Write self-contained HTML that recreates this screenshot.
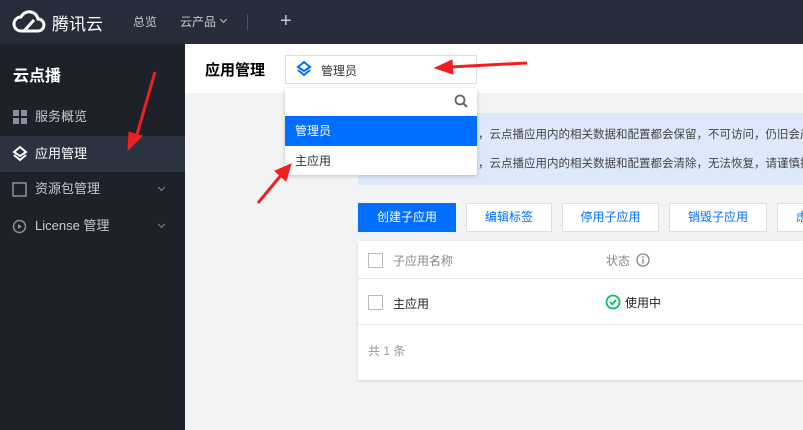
<!DOCTYPE html><html><head><meta charset="utf-8"><style>
*{margin:0;padding:0;box-sizing:border-box}
body{width:803px;height:430px;overflow:hidden;background:#f2f3f5;font-family:"Liberation Sans","Noto Sans CJK SC",sans-serif;font-size:12px;position:relative}
.a{position:absolute}
.top{left:0;top:0;width:803px;height:44px;background:#262c39}
.side{left:0;top:44px;width:185px;height:386px;background:#1d2129}
.ni{left:0;width:185px;height:36px;color:#c6c9cf;font-size:13px;line-height:36px;padding-left:35px}
.btn{top:203px;height:29px;background:#fff;border:1px solid #dcdee2;color:#006eff;text-align:center;line-height:27px;font-size:12px}
.chev{left:159px;width:5px;height:5px;border-right:1.3px solid #8a8f99;border-bottom:1.3px solid #8a8f99;transform:rotate(45deg)}
</style></head><body>
<div class="a top"></div>
<svg class="a" style="left:12px;top:8px" width="34" height="26" viewBox="0 0 34 26"><path d="M9 23 H26 A6 6 0 0 0 26 11 A9 9 0 0 0 9 9 A7 7 0 0 0 9 23 Z M12 23 L22 12" fill="none" stroke="#fff" stroke-width="3"/></svg>
<div class="a" style="left:52px;top:10px;color:#fff;font-size:17px">腾讯云</div>
<div class="a" style="left:133px;top:13px;color:#c6c9cf;font-size:12px">总览</div>
<div class="a" style="left:180px;top:13px;color:#c6c9cf;font-size:12px">云产品</div>
<div class="a" style="left:221px;top:17px;width:5px;height:5px;border-right:1.2px solid #c6c9cf;border-bottom:1.2px solid #c6c9cf;transform:rotate(45deg)"></div>
<div class="a" style="left:247px;top:14px;width:1px;height:16px;background:#4a505c"></div>
<div class="a" style="left:280px;top:10px;color:#c6c9cf;font-size:20px">+</div>
<div class="a side"></div>
<div class="a" style="left:13px;top:62px;color:#fff;font-size:16px;font-weight:bold">云点播</div>
<div class="a ni" style="top:99px">服务概览</div>
<svg class="a" style="left:13px;top:110px" width="14" height="14"><g fill="#8a8f99"><rect x="0" y="0" width="6" height="6"/><rect x="8" y="0" width="6" height="6"/><rect x="0" y="8" width="6" height="6"/><rect x="8" y="8" width="6" height="6"/></g></svg>
<div class="a ni" style="top:136px;background:#2b3240;color:#fff">应用管理</div>
<svg class="a" style="left:12px;top:146px" width="16" height="16"><path d="M8 1 L14 6 L8 10 L2 6 Z M2 9 L8 14 L14 9" fill="none" stroke="#fff" stroke-width="2"/></svg>
<div class="a ni" style="top:171px">资源包管理</div>
<div class="a chev" style="top:185px"></div>
<svg class="a" style="left:12px;top:182px" width="15" height="15"><rect x="1" y="1" width="13" height="13" fill="none" stroke="#8a8f99" stroke-width="1.5"/></svg>
<div class="a ni" style="top:208px">License 管理</div>
<div class="a chev" style="top:222px"></div>
<svg class="a" style="left:12px;top:219px" width="15" height="15"><circle cx="7.5" cy="7.5" r="6" fill="none" stroke="#8a8f99" stroke-width="1.5"/><path d="M6 5 L10 7.5 L6 10Z" fill="#8a8f99"/></svg>
<div class="a" style="left:185px;top:44px;width:618px;height:49px;background:#fff"></div>
<div class="a" style="left:205px;top:59px;font-size:15px;font-weight:bold;color:#000">应用管理</div>
<div class="a" style="left:285px;top:55px;width:192px;height:29px;border:1px solid #dcdee2;background:#fff"></div>
<svg class="a" style="left:296px;top:61px" width="16" height="16"><path d="M8 1 L14 6 L8 10 L2 6 Z M2 9 L8 14 L14 9" fill="none" stroke="#006eff" stroke-width="2"/></svg>
<div class="a" style="left:321px;top:62px;color:#333">管理员</div>
<div class="a" style="left:358px;top:113px;width:445px;height:72px;background:#dde8fb"></div>
<div class="a" style="left:478px;top:126px;color:#444;white-space:nowrap;font-size:11.5px">，云点播应用内的相关数据和配置都会保留，不可访问，仍旧会产</div>
<div class="a" style="left:478px;top:155px;color:#444;white-space:nowrap;font-size:11.5px">，云点播应用内的相关数据和配置都会清除，无法恢复，请谨慎操</div>
<div class="a" style="left:285px;top:88px;width:192px;height:87px;background:#fff;box-shadow:0 1px 4px rgba(0,0,0,.2)"></div>
<svg class="a" style="left:454px;top:94px" width="15" height="15"><circle cx="6" cy="6" r="4.5" fill="none" stroke="#666" stroke-width="1.8"/><path d="M9.5 9.5 L13 13" stroke="#666" stroke-width="2"/></svg>
<div class="a" style="left:285px;top:116px;width:192px;height:30px;background:#006eff;color:#fff;line-height:30px;padding-left:10px">管理员</div>
<div class="a" style="left:295px;top:152px;color:#333">主应用</div>
<div class="a btn" style="left:358px;width:98px;background:#006eff;border-color:#006eff;color:#fff">创建子应用</div>
<div class="a btn" style="left:466px;width:86px">编辑标签</div>
<div class="a btn" style="left:562px;width:97px">停用子应用</div>
<div class="a btn" style="left:669px;width:98px">销毁子应用</div>
<div class="a btn" style="left:777px;width:40px;text-align:left;padding-left:18px">虑</div>
<div class="a" style="left:358px;top:241px;width:445px;height:139px;background:#fff;box-shadow:0 1px 3px rgba(0,0,0,.15)"></div>
<div class="a" style="left:358px;top:278px;width:445px;height:1px;background:#e5e5e5"></div>
<div class="a" style="left:358px;top:324px;width:445px;height:1px;background:#e5e5e5"></div>
<div class="a" style="left:368px;top:253px;width:15px;height:15px;border:1px solid #bbb"></div>
<div class="a" style="left:393px;top:252px;color:#888">子应用名称</div>
<div class="a" style="left:606px;top:252px;color:#888">状态</div>
<svg class="a" style="left:636px;top:253px" width="14" height="14"><circle cx="7" cy="7" r="6" fill="none" stroke="#888" stroke-width="1.3"/><rect x="6.3" y="6" width="1.4" height="4.5" fill="#888"/><circle cx="7" cy="4" r=".9" fill="#888"/></svg>
<div class="a" style="left:368px;top:295px;width:15px;height:15px;border:1px solid #bbb"></div>
<div class="a" style="left:393px;top:295px;color:#222">主应用</div>
<svg class="a" style="left:605px;top:294px" width="16" height="16"><circle cx="8" cy="8" r="6.5" fill="none" stroke="#0abf5b" stroke-width="1.8"/><path d="M5 8 L7.3 10.3 L11 6" fill="none" stroke="#0abf5b" stroke-width="1.8"/></svg>
<div class="a" style="left:625px;top:294px;color:#222">使用中</div>
<div class="a" style="left:368px;top:342px;color:#999">共 1 条</div>
<svg class="a" style="left:0;top:0" width="803" height="430"><g fill="#f02020" stroke="#f02020"><path d="M155 72 L136 138" stroke-width="3"/><path d="M128 150 L129 132 L142 136 Z"/><path d="M527 63 L450 67" stroke-width="3"/><path d="M435 68 L452 60 L453 74 Z"/><path d="M258 203 L282 174" stroke-width="3"/><path d="M291 164 L286 181 L275 171 Z"/></g></svg>
</body></html>
